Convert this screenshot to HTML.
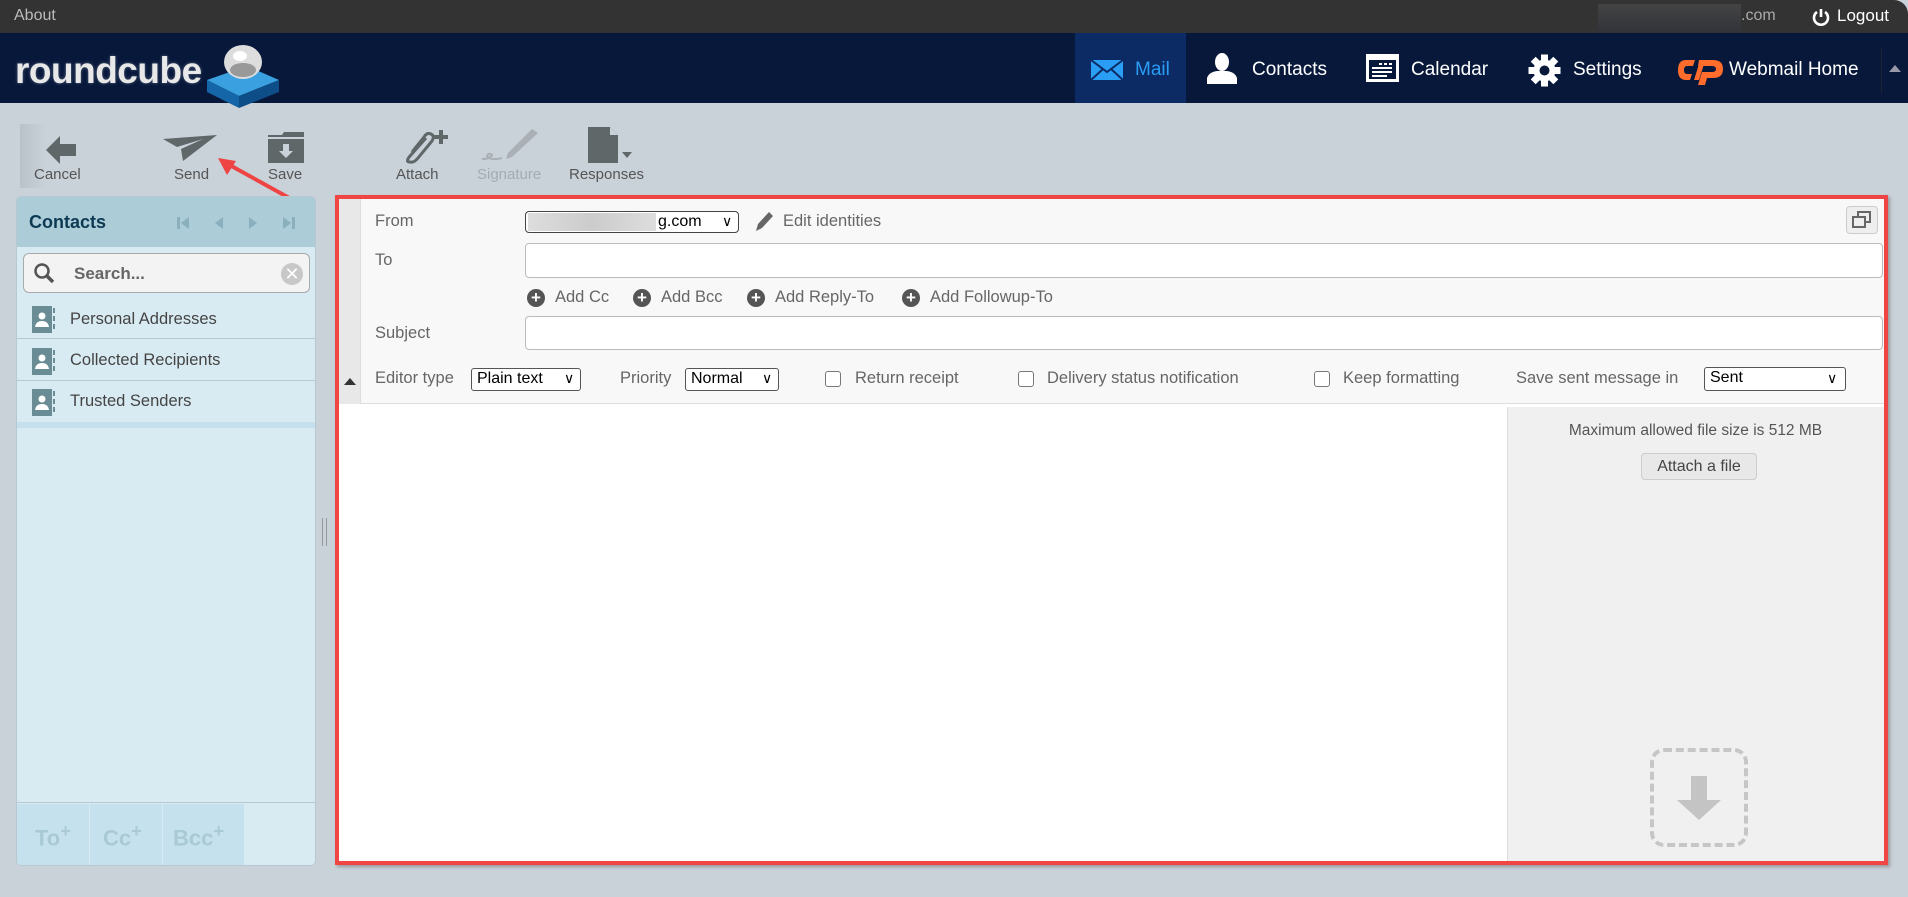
<!DOCTYPE html>
<html><head><meta charset="utf-8"><style>
*{box-sizing:border-box;margin:0;padding:0}
body{width:1908px;height:897px;overflow:hidden;background:#c9d1d9;font-family:"Liberation Sans",sans-serif;position:relative}
.a{position:absolute}
.top{left:0;top:0;width:1908px;height:33px;background:#333;border-top-right-radius:14px}
.hdr{left:0;top:33px;width:1908px;height:70px;background:#07183b}
.nav{color:#fff;font-size:19px;top:59px}
.tb{color:#555;font-size:15px;top:166px}
.lbl{color:#666;font-size:16.5px}
.inp{background:#fff;border:1px solid #bbb;border-radius:4px}
.sel{background:#fff;border:1px solid #555;border-radius:3px;font-size:16px;color:#000;padding-left:5px;line-height:20px}
.cb{width:16px;height:16px;border:1px solid #777;border-radius:3px;background:#fff}
.plus{width:18px;height:18px;border-radius:50%;background:#555;color:#fff;font-size:17px;font-weight:bold;line-height:18px;text-align:center}
.ab{width:24px;height:27px}
</style></head><body>
<div class="a top"></div>
<div class="a" style="left:14px;top:7px;color:#bbb;font-size:16px">About</div>
<div class="a" style="left:1598px;top:4px;width:143px;height:37px;background:linear-gradient(#444,#2c2e36)"></div>
<div class="a" style="left:1741px;top:7px;color:#aaa;font-size:16px">.com</div>
<svg class="a" style="left:1811px;top:7px" width="20" height="20" viewBox="0 0 20 20"><path d="M6 5a7 7 0 1 0 8 0" fill="none" stroke="#fff" stroke-width="2.6"/><path d="M10 2v8" stroke="#fff" stroke-width="2.6"/></svg>
<div class="a" style="left:1837px;top:6px;color:#fff;font-size:17px">Logout</div>
<div class="a hdr"></div>
<div class="a" style="left:15px;top:50px;color:#e8e8e8;font-size:37px;font-weight:bold;letter-spacing:-0.5px;text-shadow:0 0 3px #fff5">roundcube</div>
<svg class="a" style="left:203px;top:42px" width="80" height="68" viewBox="0 0 80 68"><path d="M4 38 L44 24 L76 38 L36 54Z" fill="#3aa0e0"/><path d="M4 38 L36 54 L36 66 L4 50Z" fill="#1466a8"/><path d="M36 54 L76 38 L76 50 L36 66Z" fill="#0e4e88"/><ellipse cx="40" cy="20" rx="19" ry="17" fill="#ddd"/><ellipse cx="40" cy="28" rx="13" ry="7" fill="#999"/><ellipse cx="37" cy="14" rx="7" ry="5" fill="#fff"/></svg>
<div class="a" style="left:1075px;top:33px;width:111px;height:70px;background:#0c2a63"></div>
<svg class="a" style="left:1090px;top:59px" width="34" height="22" viewBox="0 0 34 22"><rect x="1" y="1" width="32" height="20" fill="#2a9df4"/><path d="M1 1 L17 13 L33 1 M1 21 L13 10 M33 21 L21 10" fill="none" stroke="#0c2a63" stroke-width="2"/></svg>
<div class="a nav" style="left:1135px;color:#2a9df4">Mail</div>
<svg class="a" style="left:1207px;top:53px" width="30" height="31" viewBox="0 0 30 31"><ellipse cx="15" cy="9" rx="7" ry="9" fill="#fff"/><path d="M0 31 L0 25 Q2 19 10 18 L20 18 Q28 19 30 25 L30 31Z" fill="#fff"/></svg>
<div class="a nav" style="left:1252px">Contacts</div>
<svg class="a" style="left:1365px;top:53px" width="35" height="30" viewBox="0 0 35 30"><rect x="1" y="1" width="33" height="28" fill="#fff"/><rect x="4" y="7" width="27" height="19" fill="#07183b"/><g fill="#fff"><rect x="14" y="10" width="3" height="2"/><rect x="19" y="10" width="3" height="2"/><rect x="24" y="10" width="3" height="2"/><rect x="7" y="14" width="20" height="2"/><rect x="7" y="18" width="20" height="2"/><rect x="7" y="22" width="15" height="2"/></g></svg>
<div class="a nav" style="left:1411px">Calendar</div>
<svg class="a" style="left:1528px;top:54px" width="33" height="33" viewBox="0 0 33 33"><g fill="#fff" transform="translate(16.5 16.5)"><circle r="11"/><g id="t"><rect x="-3.5" y="-16" width="7" height="7"/></g><use href="#t" transform="rotate(45)"/><use href="#t" transform="rotate(90)"/><use href="#t" transform="rotate(135)"/><use href="#t" transform="rotate(180)"/><use href="#t" transform="rotate(225)"/><use href="#t" transform="rotate(270)"/><use href="#t" transform="rotate(315)"/></g><circle cx="16.5" cy="16.5" r="5" fill="#07183b"/></svg>
<div class="a nav" style="left:1573px">Settings</div>
<svg class="a" style="left:1677px;top:54px" width="48" height="32" viewBox="0 0 48 32"><path d="M18 6 H9 Q1 6 1 16 Q1 26 9 26 H13 L15 20 H10 Q7 20 7 16 Q7 12 10 12 H16Z" fill="#ff6c2c"/><path d="M22 6 H36 Q46 6 46 15 Q46 24 36 24 H30 L28 31 H21 L25 18 H35 Q39 18 39 15 Q39 12 35 12 H21Z" fill="#ff6c2c"/><path d="M17 26 L22 10 H27 L22 26Z" fill="#ff6c2c"/></svg>
<div class="a nav" style="left:1729px">Webmail Home</div>
<div class="a" style="left:1881px;top:48px;width:1px;height:45px;background:#223"></div>
<div class="a" style="left:1889px;top:65px;width:0;height:0;border:6px solid transparent;border-bottom:7px solid #99a;border-top:0"></div>

<div class="a" style="left:20px;top:124px;width:64px;height:64px;background:linear-gradient(90deg,#b9c1c9,#c9d1d9 40%)"></div>
<svg class="a" style="left:46px;top:136px" width="30" height="28" viewBox="0 0 30 28"><path d="M0 14 L14 0 V8 H30 V20 H14 V28Z" fill="#606768"/></svg>
<div class="a tb" style="left:34px">Cancel</div>
<svg class="a" style="left:163px;top:135px" width="54" height="26" viewBox="0 0 54 26"><path d="M0 4 L54 0 L20 26 L18 14 L40 4 L14 12Z" fill="#606768"/></svg>
<div class="a tb" style="left:174px">Send</div>
<svg class="a" style="left:268px;top:131px" width="36" height="32" viewBox="0 0 36 32"><path d="M0 4 H14 L16 1 H36 V6 H0Z" fill="#606768"/><rect x="0" y="8" width="36" height="24" fill="#606768"/><path d="M15 13 H21 V20 H25 L18 27 L11 20 H15Z" fill="#c9d1d9"/></svg>
<div class="a tb" style="left:268px">Save</div>
<svg class="a" style="left:400px;top:128px" width="52" height="36" viewBox="0 0 52 36"><path d="M26 10 L10 28 Q5 34 10 34 Q14 35 18 30 L32 13 Q35 8 31 6 Q27 4 24 9 L12 24" fill="none" stroke="#606768" stroke-width="3"/><path d="M41 2 V16 M34 9 H48" stroke="#606768" stroke-width="4"/></svg>
<div class="a tb" style="left:396px">Attach</div>
<svg class="a" style="left:480px;top:125px" width="62" height="40" viewBox="0 0 62 40"><path d="M52 4 L58 8 L32 32 L26 34 L28 28Z" fill="#aab0b5"/><path d="M2 34 Q10 34 12 30 Q9 27 7 31 Q10 36 22 33" fill="none" stroke="#aab0b5" stroke-width="2"/></svg>
<div class="a tb" style="left:477px;color:#a5acb1">Signature</div>
<svg class="a" style="left:588px;top:127px" width="46" height="36" viewBox="0 0 46 36"><path d="M0 0 H22 L30 8 V36 H0Z" fill="#606768"/><path d="M22 0 V8 H30" fill="#c9d1d9"/><path d="M34 25 H44 L39 31Z" fill="#606768"/></svg>
<div class="a tb" style="left:569px">Responses</div>
<svg class="a" style="left:210px;top:155px" width="100" height="55"><path d="M92 50 L16 8" stroke="#ee4444" stroke-width="4" stroke-linecap="round"/><path d="M8 3 L26 6 L17 20Z" fill="#ee4444"/></svg>

<!-- left panel -->
<div class="a" style="left:16px;top:196px;width:300px;height:670px;background:#d9ebf2;border:1px solid #b8c8d0;border-radius:5px;overflow:hidden">
<div style="height:50px;background:#acccd8;position:relative"><div class="a" style="left:12px;top:15px;font-size:18px;font-weight:bold;color:#0d3a52">Contacts</div>
<svg class="a" style="left:160px;top:18px" width="130" height="16" fill="#8ab0bd"><rect x="0" y="2" width="3" height="12"/><path d="M12 2 L4 8 L12 14Z"/><path d="M46 2 L38 8 L46 14Z"/><path d="M72 2 L80 8 L72 14Z"/><path d="M106 2 L114 8 L106 14Z"/><rect x="115" y="2" width="3" height="12"/></svg></div>
<div class="a" style="left:6px;top:56px;width:287px;height:40px;background:#f3f3f3;border:1px solid #aaa;border-radius:6px"></div>
<svg class="a" style="left:16px;top:65px" width="22" height="22"><circle cx="9" cy="9" r="6.5" fill="none" stroke="#555" stroke-width="2.5"/><path d="M13.5 13.5 L20 20" stroke="#555" stroke-width="3.5"/></svg>
<div class="a" style="left:57px;top:67px;font-size:17px;font-weight:bold;color:#666">Search...</div>
<div class="a" style="left:264px;top:66px;width:22px;height:22px;border-radius:50%;background:#c8c8c8;color:#fff;font-size:18px;line-height:22px;text-align:center">✕</div>
<div class="a" style="left:0;top:102px;width:300px;height:124px;border-bottom:1px solid #b8c8d0"></div>
<div class="a" style="left:0;top:141px;width:300px;border-top:1px solid #b8c8d0"></div>
<div class="a" style="left:0;top:183px;width:300px;border-top:1px solid #b8c8d0"></div>
<div class="a" style="left:0;top:225px;width:300px;height:6px;background:#c5e0ec"></div>
<svg class="a ab" style="left:15px;top:109px" viewBox="0 0 24 27"><rect width="20" height="27" fill="#6a8c95"/><rect x="21" y="2" width="2" height="5" fill="#6a8c95"/><rect x="21" y="10" width="2" height="5" fill="#6a8c95"/><rect x="21" y="18" width="2" height="5" fill="#6a8c95"/><circle cx="10" cy="10" r="3.5" fill="#fff"/><path d="M3 21 Q4 15 10 15 Q16 15 17 21Z" fill="#fff"/></svg>
<svg class="a ab" style="left:15px;top:151px" viewBox="0 0 24 27"><rect width="20" height="27" fill="#6a8c95"/><rect x="21" y="2" width="2" height="5" fill="#6a8c95"/><rect x="21" y="10" width="2" height="5" fill="#6a8c95"/><rect x="21" y="18" width="2" height="5" fill="#6a8c95"/><circle cx="10" cy="10" r="3.5" fill="#fff"/><path d="M3 21 Q4 15 10 15 Q16 15 17 21Z" fill="#fff"/></svg>
<svg class="a ab" style="left:15px;top:192px" viewBox="0 0 24 27"><rect width="20" height="27" fill="#6a8c95"/><rect x="21" y="2" width="2" height="5" fill="#6a8c95"/><rect x="21" y="10" width="2" height="5" fill="#6a8c95"/><rect x="21" y="18" width="2" height="5" fill="#6a8c95"/><circle cx="10" cy="10" r="3.5" fill="#fff"/><path d="M3 21 Q4 15 10 15 Q16 15 17 21Z" fill="#fff"/></svg>
<div class="a" style="left:53px;top:113px;font-size:16.5px;color:#444">Personal Addresses</div>
<div class="a" style="left:53px;top:154px;font-size:16.5px;color:#444">Collected Recipients</div>
<div class="a" style="left:53px;top:195px;font-size:16.5px;color:#444">Trusted Senders</div>
<div class="a" style="left:0;top:605px;width:300px;border-top:1px solid #b8c8d0"></div>
<div class="a" style="left:0;top:607px;width:72px;height:64px;background:#c5e1ed"></div>
<div class="a" style="left:73px;top:607px;width:72px;height:64px;background:#c5e1ed"></div>
<div class="a" style="left:146px;top:607px;width:81px;height:64px;background:#c5e1ed"></div>
<div class="a" style="left:18px;top:623px;font-size:22px;font-weight:bold;color:#a9c9d5">To<sup>+</sup></div>
<div class="a" style="left:86px;top:623px;font-size:22px;font-weight:bold;color:#a9c9d5">Cc<sup>+</sup></div>
<div class="a" style="left:156px;top:623px;font-size:22px;font-weight:bold;color:#a9c9d5">Bcc<sup>+</sup></div>
</div>
<div class="a" style="left:322px;top:518px;height:28px;border-left:1px solid #999;border-right:1px solid #999;width:5px"></div>

<!-- compose -->
<div class="a" style="left:335px;top:195px;width:1553px;height:670px;border:4px solid #f04545;background:#fff;box-shadow:2px 2px 3px #999"></div>
<div class="a" style="left:339px;top:199px;width:1545px;height:205px;background:#f8f8f8;border-bottom:1px solid #ddd"></div>
<div class="a" style="left:339px;top:199px;width:22px;height:205px;background:#e8e8e8;border-right:1px solid #ddd"></div>
<div class="a" style="left:344px;top:378px;border:6px solid transparent;border-bottom:7px solid #333;border-top:0"></div>
<div class="a lbl" style="left:375px;top:212px">From</div>
<div class="a sel" style="left:525px;top:211px;width:214px;height:22px;border-color:#444;border-radius:4px"><div class="a" style="left:2px;top:1px;width:128px;height:18px;background:linear-gradient(90deg,#ddd,#ccc,#ddd)"></div><span class="a" style="left:132px;top:0">g.com</span><span class="a" style="left:196px;top:-1px;font-size:14px">&#x2228;</span></div>
<svg class="a" style="left:753px;top:209px" width="22" height="24"><path d="M3 22 L5 15 L16 3 L20 7 L9 19Z" fill="#666"/></svg>
<div class="a lbl" style="left:783px;top:212px">Edit identities</div>
<div class="a" style="left:1846px;top:206px;width:32px;height:28px;border:1px solid #ccc;border-radius:4px;background:#eee"></div>
<svg class="a" style="left:1852px;top:211px" width="20" height="18"><rect x="6" y="1" width="12" height="10" fill="none" stroke="#666" stroke-width="2"/><rect x="1" y="6" width="12" height="10" fill="#eee" stroke="#666" stroke-width="2"/></svg>
<div class="a lbl" style="left:375px;top:251px">To</div>
<div class="a inp" style="left:525px;top:243px;width:1358px;height:35px"></div>
<div class="a plus" style="left:527px;top:289px">+</div><div class="a lbl" style="left:555px;top:288px">Add Cc</div>
<div class="a plus" style="left:633px;top:289px">+</div><div class="a lbl" style="left:661px;top:288px">Add Bcc</div>
<div class="a plus" style="left:747px;top:289px">+</div><div class="a lbl" style="left:775px;top:288px">Add Reply-To</div>
<div class="a plus" style="left:902px;top:289px">+</div><div class="a lbl" style="left:930px;top:288px">Add Followup-To</div>
<div class="a lbl" style="left:375px;top:324px">Subject</div>
<div class="a inp" style="left:525px;top:316px;width:1358px;height:34px"></div>
<div class="a lbl" style="left:375px;top:369px">Editor type</div>
<div class="a sel" style="left:471px;top:368px;width:110px;height:23px">Plain text<span class="a" style="left:92px;top:-1px;font-size:14px">&#x2228;</span></div>
<div class="a lbl" style="left:620px;top:369px">Priority</div>
<div class="a sel" style="left:685px;top:368px;width:94px;height:23px">Normal<span class="a" style="left:76px;top:-1px;font-size:14px">&#x2228;</span></div>
<div class="a cb" style="left:825px;top:371px"></div><div class="a lbl" style="left:855px;top:369px">Return receipt</div>
<div class="a cb" style="left:1018px;top:371px"></div><div class="a lbl" style="left:1047px;top:369px">Delivery status notification</div>
<div class="a cb" style="left:1314px;top:371px"></div><div class="a lbl" style="left:1343px;top:369px">Keep formatting</div>
<div class="a lbl" style="left:1516px;top:369px">Save sent message in</div>
<div class="a sel" style="left:1704px;top:367px;width:142px;height:24px">Sent<span class="a" style="left:122px;top:0;font-size:14px">&#x2228;</span></div>
<div class="a" style="left:1507px;top:407px;width:377px;height:454px;background:#f0f0f0;border-left:1px solid #ddd"></div>
<div class="a" style="left:1507px;top:422px;width:377px;text-align:center;font-size:15.5px;color:#555">Maximum allowed file size is 512 MB</div>
<div class="a" style="left:1641px;top:453px;width:116px;height:27px;border:1px solid #ccc;border-radius:4px;background:#e8e8e8;font-size:16px;color:#444;text-align:center;line-height:25px">Attach a file</div>
<div class="a" style="left:1650px;top:748px;width:98px;height:99px;border:4px dashed #c6c6c6;border-radius:14px"></div>
<svg class="a" style="left:1674px;top:775px" width="50" height="46"><path d="M17 1 H33 V25 H47 L25 45 L3 25 H17Z" fill="#c4c4c4"/></svg>
</body></html>
